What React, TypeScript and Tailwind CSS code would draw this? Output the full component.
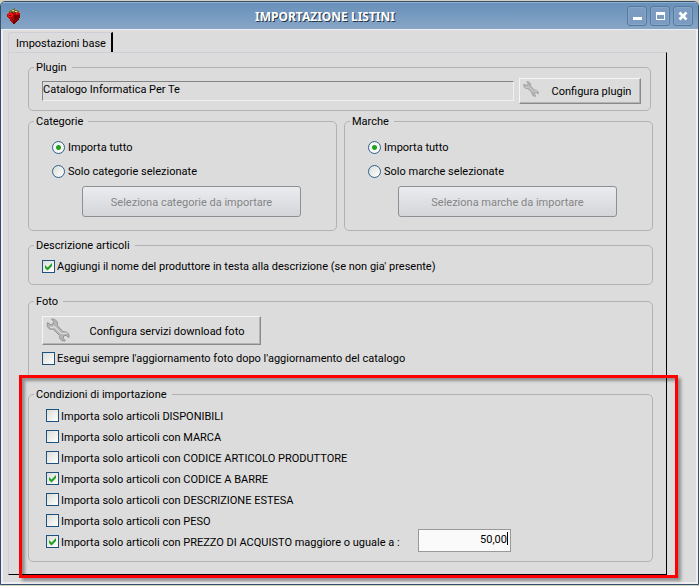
import { useState } from "react";
import type { ReactNode } from "react";

type GroupProps = {
  title: string;
  className?: string;
  bodyClassName: string;
  children: ReactNode;
};

type CheckProps = {
  label: string;
  checked: boolean;
  onChange: (v: boolean) => void;
};

type ChoiceGroupProps = {
  title: string;
  name: string;
  options: string[];
  buttonLabel: string;
};

const CONDITIONS = [
  { label: "Importa solo articoli DISPONIBILI", on: false },
  { label: "Importa solo articoli con MARCA", on: false },
  { label: "Importa solo articoli con CODICE ARTICOLO PRODUTTORE", on: false },
  { label: "Importa solo articoli con CODICE A BARRE", on: true },
  { label: "Importa solo articoli con DESCRIZIONE ESTESA", on: false },
  { label: "Importa solo articoli con PESO", on: false },
];

function Strawberry() {
  return (
    <svg width="14" height="17" viewBox="0 0 14 17" shapeRendering="crispEdges" aria-hidden="true">
      <path d="M2 4h10v1h1v5h-1v2h-1v1h-1v1H9v1H8v1H6v-1H5v-1H4v-1H3v-2H2v-1H1V9H0V6h1V5h1z" fill="#b00c0c" />
      <path d="M7 7h6v3h-1v2h-1v1h-1v1H9v1H8v1H6v-4h1z" fill="#7d0000" />
      <path d="M1 5h4v1h1v2H5v1H1zM9 4h3v2h-2v1H9z" fill="#f01414" />
      <path d="M2 7h2v1H2zM5 11h1v1H5zM9 9h1v1H9z" fill="#5c0000" />
      <path d="M3 2h2V1h2V0h1v2h3v1h1v1h-2v1H9V4H7v1H6V4H4v1H3V4H2V3h1z" fill="#6d7428" />
      <path d="M5 2h2v1H5zM8 3h2v1H8z" fill="#d9dcae" />
    </svg>
  );
}

function WrenchIcon({ className }: { className: string }) {
  return (
    <svg className={className} viewBox="0 0 24 24" aria-hidden="true">
      <path
        d="M5.500 1 7.600 3.500 7 6 4.600 6.600 1.500 4.600C.6 7 1.400 9.800 3.600 10.900c1.200.6 2.500.6 3.600.3l6.300 6.300c-.3 1.500.1 3 1.300 4.200 1.300 1.200 3 1.600 4.600 1.100l-2.300-2.600.6-2.300 2.400-.6 2.700 2.300c.5-1.700.1-3.500-1.200-4.700-1.300-1.200-3-1.500-4.600-1.100L11.400 7.400c.4-1.500.2-3-.8-4.300C9.400 1.500 7.400.700 5.500 1z"
        fill="#b5b5b5"
        stroke="#939393"
        strokeWidth="1"
        strokeLinejoin="round"
      />
      <path d="M4 9c1.400.8 2.900.6 4.300-.4l7.400 7.300M16.300 16c1.400-1 3-1.200 4.800-.5" fill="none" stroke="#dadada" strokeWidth="1.300" />
    </svg>
  );
}

function Group({ title, className = "", bodyClassName, children }: GroupProps) {
  return (
    <fieldset className={`min-w-0 rounded-[5px] border border-[#b2b2b2] ${className}`}>
      <legend className="ml-[5px] pt-[2px] pr-[5px] pl-[2px]">{title}</legend>
      <div className={bodyClassName}>{children}</div>
    </fieldset>
  );
}

function Check({ label, checked, onChange }: CheckProps) {
  return (
    <label className="flex items-center gap-[2px] whitespace-nowrap">
      <span className="relative flex h-[13px] w-[13px] shrink-0">
        <input
          type="checkbox"
          checked={checked}
          onChange={(e) => onChange(e.target.checked)}
          className="h-[13px] w-[13px] appearance-none border border-[#1c5180] bg-linear-to-br from-[#dcdcd7] to-white"
        />
        {checked && (
          <svg className="pointer-events-none absolute inset-0" width="13" height="13" viewBox="0 0 13 13" aria-hidden="true">
            <path d="M3 5v3l2.500 2.500L10 6V3L5.500 7.500z" fill="#21a121" />
          </svg>
        )}
      </span>
      <span className="pt-[2px]">{label}</span>
    </label>
  );
}

function ChoiceGroup({ title, name, options, buttonLabel }: ChoiceGroupProps) {
  const [selected, setSelected] = useState(0);

  return (
    <Group title={title} bodyClassName="pt-[6px] pr-[23px] pb-[13px] pl-[23px]">
      {options.map((opt, i) => (
        <label key={opt} className="flex h-6 items-center gap-[3px]">
          <input
            type="radio"
            name={name}
            checked={selected === i}
            onChange={() => setSelected(i)}
            className="h-[13px] w-[13px] shrink-0 appearance-none rounded-full border border-[#2b5f92] bg-linear-to-br from-[#dcdcd7] to-white checked:bg-[radial-gradient(circle,#21a121_0_2px,#f6f6f4_3px)]"
          />
          <span className="pt-[2px]">{opt}</span>
        </label>
      ))}
      <button
        disabled={selected === 0}
        className="mt-[3px] ml-[30px] block h-[31px] w-[219px] rounded-[3px] border border-[#8c8f94] bg-linear-to-b from-[#ebecf0] to-[#d3d5d9] pt-[2px] disabled:text-[#858585]"
      >
        {buttonLabel}
      </button>
    </Group>
  );
}

const titleButton =
  "flex h-5 w-5 items-center justify-center rounded-[3px] border border-[#56799f] bg-[#7b9cc0] shadow-[inset_0_0_0_1px_#86a5c6]";
const raisedButton =
  "flex items-center border border-t-[#f4f4f4] border-l-[#f4f4f4] border-r-[#8a8a8a] border-b-[#8a8a8a] bg-[#dcdcdc] shadow-[inset_-1px_-1px_0_#b4b4b4]";

export default function App() {
  const [addVendor, setAddVendor] = useState(true);
  const [updatePhotos, setUpdatePhotos] = useState(false);
  const [conditions, setConditions] = useState(CONDITIONS);
  const [priceOn, setPriceOn] = useState(true);
  const [price, setPrice] = useState("50,00");

  const toggle = (index: number, on: boolean) =>
    setConditions((prev) => prev.map((c, i) => (i === index ? { ...c, on } : c)));

  return (
    <div className="bg-[#d3d0c2] py-px font-['Roboto',sans-serif] text-[11px] leading-[14px] text-black">
      <div className="overflow-hidden rounded-t-[5px] border border-[#35506b] bg-[#dcdcdc]">
        {/* Title bar */}
        <header className="flex h-[27px] items-center border-t border-[#8fb0d0] bg-linear-to-b from-[#6890ba] to-[#88a6c6] pr-[5px] pl-[6px]">
          <div className="w-4">
            <Strawberry />
          </div>
          <h1 className="flex-1 pt-[2px] text-center font-['Noto_Sans',sans-serif] text-[12px] font-bold text-white [text-shadow:1px_1px_0_#24384c]">
            IMPORTAZIONE LISTINI
          </h1>
          <div className="flex gap-[3px]">
            <button className={titleButton} aria-label="Riduci">
              <svg width="12" height="12" viewBox="0 0 12 12">
                <path d="M2 7h9v3H2z" fill="#fff" />
              </svg>
            </button>
            <button className={titleButton} aria-label="Ingrandisci">
              <svg width="12" height="12" viewBox="0 0 12 12">
                <path d="M2 2h9v8H2zM3 5v4h7V5z" fill="#fff" fillRule="evenodd" />
              </svg>
            </button>
            <button className={titleButton} aria-label="Chiudi">
              <svg width="12" height="12" viewBox="0 0 12 12">
                <path d="M2.500 2.500l7 7M9.500 2.500l-7 7" stroke="#fff" strokeWidth="2.600" />
              </svg>
            </button>
          </div>
        </header>

        <main className="border-2 border-t border-[#efeff3] pt-[2px] pr-[29px] pb-[7px] pl-[5px]">
          {/* Tab */}
          <div role="tablist" className="flex">
            <button
              role="tab"
              aria-selected="true"
              className="h-5 rounded-tl-[3px] border-t border-r-2 border-l border-t-[#cfcfd8] border-r-black border-l-[#cfcfd8] pt-[3px] pr-[5px] pl-[7px]"
            >
              Impostazioni base
            </button>
          </div>

          <div
            role="tabpanel"
            className="border border-t-[#cfcfd8] border-r-black border-b-black border-l-[#cfcfd8] pt-[6px] pr-[13px] pb-[12px] pl-[19px]"
          >
            <Group title="Plugin" className="mr-[2px]" bodyClassName="pt-[3px] pr-[9px] pb-[6px] pl-[13px]">
              <div className="flex items-center gap-[5px]">
                <input
                  readOnly
                  aria-label="Plugin"
                  value="Catalogo Informatica Per Te"
                  className="h-5 min-w-0 flex-1 border border-t-[#858585] border-r-[#f0f0f4] border-b-[#f0f0f4] border-l-[#858585] bg-transparent pb-[3px] outline-none"
                />
                <button className={`${raisedButton} h-[26px] w-[122px] pl-[3px]`}>
                  <WrenchIcon className="mb-[4px] h-4 w-4" />
                  <span className="flex-1 pt-[2px] pl-[4px] text-center">Configura plugin</span>
                </button>
              </div>
            </Group>

            <div className="mt-[2px] grid grid-cols-2 gap-[7px]">
              <ChoiceGroup
                title="Categorie"
                name="categorie"
                options={["Importa tutto", "Solo categorie selezionate"]}
                buttonLabel="Seleziona categorie da importare"
              />
              <ChoiceGroup
                title="Marche"
                name="marche"
                options={["Importa tutto", "Solo marche selezionate"]}
                buttonLabel="Seleziona marche da importare"
              />
            </div>

            <Group title="Descrizione articoli" className="mt-[6px]" bodyClassName="pt-[5px] pb-[10px] pl-[13px]">
              <Check
                label="Aggiungi il nome del produttore in testa alla descrizione (se non gia' presente)"
                checked={addVendor}
                onChange={setAddVendor}
              />
            </Group>

            <Group title="Foto" className="mt-[8px]" bodyClassName="pt-[7px] pb-[11px] pl-[13px]">
              <button className={`${raisedButton} mb-[5px] h-[29px] w-[219px] pl-[3px]`}>
                <WrenchIcon className="mb-[2px] h-6 w-6" />
                <span className="flex-1 pt-[2px] pl-[4px] text-center">Configura servizi download foto</span>
              </button>
              <Check
                label="Esegui sempre l'aggiornamento foto dopo l'aggiornamento del catalogo"
                checked={updatePhotos}
                onChange={setUpdatePhotos}
              />
            </Group>

            <div className="relative mt-[8px]">
              <Group title="Condizioni di importazione" bodyClassName="pt-[3px] pb-[9px] pl-[17px]">
                {conditions.map((c, i) => (
                  <div key={c.label} className="flex h-[21px] items-center">
                    <Check label={c.label} checked={c.on} onChange={(on) => toggle(i, on)} />
                  </div>
                ))}
                <div className="flex h-[21px] items-center">
                  <div className="w-[372px]">
                    <Check
                      label="Importa solo articoli con PREZZO DI ACQUISTO maggiore o uguale a :"
                      checked={priceOn}
                      onChange={setPriceOn}
                    />
                  </div>
                  <div className="relative self-end">
                    <input
                      aria-label="Prezzo di acquisto minimo"
                      value={price}
                      onChange={(e) => setPrice(e.target.value)}
                      className="block h-[23px] w-[93px] border border-[#999999] bg-[#fafafa] pr-[3px] pb-[3px] text-right outline-none"
                    />
                    <span className="absolute top-[3px] right-[3px] h-[13px] w-px bg-black" />
                  </div>
                </div>
              </Group>

              {/* Red highlight around the import conditions */}
              <div className="pointer-events-none absolute -top-[11px] -right-[25px] -bottom-[16px] -left-[9px] border-3 border-[#ff0000] shadow-[3px_3px_3px_rgba(0,0,0,0.35),inset_3px_3px_3px_rgba(0,0,0,0.35)]" />
            </div>
          </div>
        </main>
      </div>
    </div>
  );
}
